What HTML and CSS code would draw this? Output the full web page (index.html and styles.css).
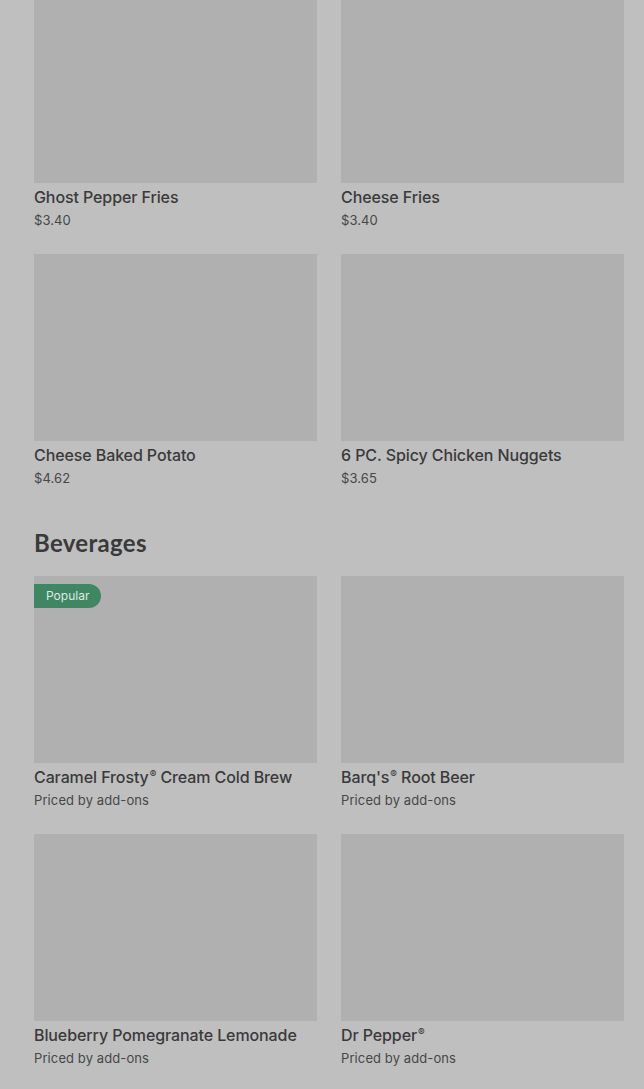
FILE: index.html
```html
<!DOCTYPE html>
<html lang="en">
<head>
<meta charset="utf-8">
<title>Menu</title>
<link rel="stylesheet" href="styles.css">
</head>
<body>
<main class="page">
  <section class="section">
    <div class="grid">
      <div class="item">
        <div class="thumb"></div>
        <div class="name">Ghost Pepper Fries</div>
        <div class="price">$3.40</div>
      </div>
      <div class="item">
        <div class="thumb"></div>
        <div class="name">Cheese Fries</div>
        <div class="price">$3.40</div>
      </div>
      <div class="item">
        <div class="thumb"></div>
        <div class="name">Cheese Baked Potato</div>
        <div class="price">$4.62</div>
      </div>
      <div class="item">
        <div class="thumb"></div>
        <div class="name">6 PC. Spicy Chicken Nuggets</div>
        <div class="price">$3.65</div>
      </div>
    </div>
  </section>
  <section class="section">
    <h2 class="heading">Beverages</h2>
    <div class="grid">
      <div class="item">
        <div class="thumb"><span class="badge">Popular</span></div>
        <div class="name">Caramel Frosty<span class="reg">®</span> Cream Cold Brew</div>
        <div class="price">Priced by add-ons</div>
      </div>
      <div class="item">
        <div class="thumb"></div>
        <div class="name">Barq's<span class="reg">®</span> Root Beer</div>
        <div class="price">Priced by add-ons</div>
      </div>
      <div class="item">
        <div class="thumb"></div>
        <div class="name">Blueberry Pomegranate Lemonade</div>
        <div class="price">Priced by add-ons</div>
      </div>
      <div class="item">
        <div class="thumb"></div>
        <div class="name">Dr Pepper<span class="reg">®</span></div>
        <div class="price">Priced by add-ons</div>
      </div>
    </div>
  </section>
</main>
</body>
</html>
```
FILE: styles.css
```css
html, body {
  margin: 0;
  padding: 0;
  background: #bfbfbf;
}
body {
  font-family: Inter, "Noto Sans", sans-serif;
  color: #3b3b3b;
  overflow: hidden;
}
.page {
  margin-top: -4px;
  padding: 0 20px 0 34px;
}
.grid {
  display: grid;
  grid-template-columns: 283px 283px;
  column-gap: 24px;
  row-gap: 24px;
}
.item {
  display: flex;
  flex-direction: column;
}
.thumb {
  position: relative;
  height: 187px;
  background: #b0b0b0;
}
.name {
  margin-top: 4px;
  height: 20px;
  font-size: 16px;
  line-height: 20px;
  font-weight: 500;
  letter-spacing: -0.1px;
  color: #3a3a3a;
  white-space: nowrap;
}
.reg {
  font-size: 10px;
  vertical-align: 5px;
  line-height: 0;
  margin-left: 1px;
}
.price {
  margin-top: 3px;
  font-size: 13px;
  line-height: 20px;
  letter-spacing: 0.1px;
  color: #474747;
}
.heading {
  margin: 39px 0 17px;
  font-family: Lato, Inter, sans-serif;
  font-size: 24px;
  line-height: 32px;
  font-weight: 700;
  letter-spacing: 0.3px;
  color: #3a3a3a;
}
.badge {
  position: absolute;
  left: 0;
  top: 8px;
  height: 24px;
  line-height: 24px;
  padding: 0 12px;
  border-radius: 0 12px 12px 0;
  background: #3f8763;
  color: #dfe9e3;
  font-size: 12px;
}
```
